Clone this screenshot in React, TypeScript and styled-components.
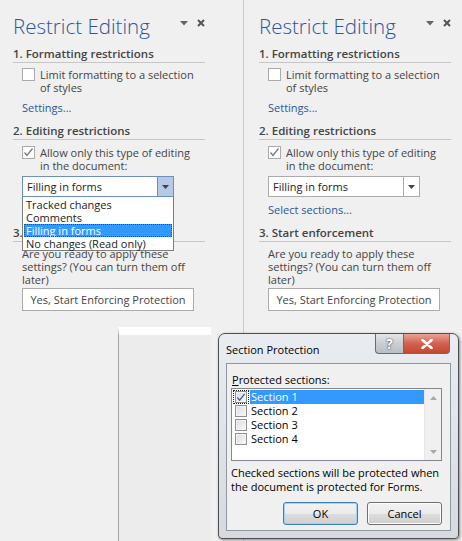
import styled, { createGlobalStyle } from 'styled-components';

const GlobalStyle = createGlobalStyle`
  html, body {
    margin: 0;
    padding: 0;
  }
  body {
    width: 462px;
    height: 541px;
    overflow: hidden;
    background: #f0f0f0;
    font-family: "Open Sans", "Noto Sans", sans-serif;
    color: #444444;
  }
`;

const EDIT_MODES = ['Tracked changes', 'Comments', 'Filling in forms', 'No changes (Read only)'];
const SECTIONS = ['Section 1', 'Section 2', 'Section 3', 'Section 4'];

const CheckMark = ({ color }: { color: string }) => (
  <svg width="11" height="11" viewBox="0 0 11 11">
    <polyline points="1.5,5.5 4,8.5 9.5,1.5" fill="none" stroke={color} strokeWidth="1.3" />
  </svg>
);

const ComboArrow = () => (
  <svg width="7" height="4" viewBox="0 0 7 4">
    <polygon points="0,0 7,0 3.5,4" fill="#444" />
  </svg>
);

interface PaneProps {
  lead: number;
  divider?: boolean;
  open?: boolean;
}

const TaskPane = ({ lead, divider, open }: PaneProps) => (
  <Pane $lead={lead} $divider={divider}>
    <TitleRow>
      <Title>Restrict Editing</Title>
      <PaneControls>
        <svg width="8" height="5" viewBox="0 0 8 5">
          <polygon points="0,0 8,0 4,4.5" fill="#666" />
        </svg>
        <svg width="8" height="8" viewBox="0 0 8 8">
          <path d="M1 1 L7 7 M7 1 L1 7" stroke="#555" strokeWidth="2" />
        </svg>
      </PaneControls>
    </TitleRow>

    <Heading $gap={5}>1. Formatting restrictions</Heading>
    <CheckRow $gap={5}>
      <PaneBox />
      <Label>
        Limit formatting to a selection
        <br />
        of styles
      </Label>
    </CheckRow>
    <PaneLink $gap={7}>Settings...</PaneLink>

    <Heading $gap={9}>2. Editing restrictions</Heading>
    <CheckRow $gap={6}>
      <PaneBox>
        <CheckMark color="#7a7a7a" />
      </PaneBox>
      <Label>
        Allow only this type of editing
        <br />
        in the document:
      </Label>
    </CheckRow>
    <ComboWrap>
      <Combo $open={open}>
        <ComboText>Filling in forms</ComboText>
        <ComboButton $open={open}>
          <ComboArrow />
        </ComboButton>
      </Combo>
      {open && (
        <DropList>
          {EDIT_MODES.map((mode) => (
            <DropItem key={mode} $active={mode === 'Filling in forms'}>
              {mode}
            </DropItem>
          ))}
        </DropList>
      )}
    </ComboWrap>
    {/* covered by the open list on the left pane, so only reserve its space there */}
    <PaneLink $gap={6} $hidden={open}>
      Select sections...
    </PaneLink>

    <Heading $gap={9}>3. Start enforcement</Heading>
    <Paragraph>
      Are you ready to apply these
      <br />
      settings? (You can turn them off
      <br />
      later)
    </Paragraph>
    <FlatButton>Yes, Start Enforcing Protection</FlatButton>
  </Pane>
);

const SectionProtection = () => (
  <Window>
    <TitleBar>
      <WindowTitle>Section Protection</WindowTitle>
      <CaptionButtons>
        <HelpButton>?</HelpButton>
        <CloseButton>
          <svg width="12" height="10" viewBox="0 0 12 10">
            <path d="M1.5 1 L10.5 9 M10.5 1 L1.5 9" stroke="#fff" strokeWidth="2.6" strokeLinecap="round" />
          </svg>
        </CloseButton>
      </CaptionButtons>
    </TitleBar>
    <Client>
      <FieldLabel>
        <u>P</u>rotected sections:
      </FieldLabel>
      <ListBox>
        <ListItems>
          {SECTIONS.map((name, i) => (
            <ListItem key={name}>
              <FocusFrame $focus={i === 0}>
                <ClassicBox>{i === 0 && <CheckMark color="#3b56a0" />}</ClassicBox>
              </FocusFrame>
              <ItemText $selected={i === 0}>{name}</ItemText>
            </ListItem>
          ))}
        </ListItems>
        <ScrollBar>
          <svg width="7" height="4" viewBox="0 0 7 4">
            <polygon points="0,4 7,4 3.5,0" fill="#a8a8a8" />
          </svg>
          <svg width="7" height="4" viewBox="0 0 7 4">
            <polygon points="0,0 7,0 3.5,4" fill="#a8a8a8" />
          </svg>
        </ScrollBar>
      </ListBox>
      <Note>
        Checked sections will be protected when
        <br />
        the document is protected for Forms.
      </Note>
      <ButtonRow>
        <DialogButton $default>OK</DialogButton>
        <DialogButton>Cancel</DialogButton>
      </ButtonRow>
    </Client>
  </Window>
);

const App = () => (
  <>
    <GlobalStyle />
    <Desktop>
      <TaskPane lead={13} divider open />
      <TaskPane lead={15} />
      <BackWindow />
      <SectionProtection />
    </Desktop>
  </>
);

export default App;

const Desktop = styled.div`
  position: relative;
  width: 462px;
  height: 541px;
  display: flex;
  overflow: hidden;
`;

const Pane = styled.section<{ $lead: number; $divider?: boolean }>`
  box-sizing: border-box;
  width: ${(p) => (p.$divider ? '244px' : 'auto')};
  flex: ${(p) => (p.$divider ? 'none' : '1')};
  height: 100%;
  padding: 11px 0 0 ${(p) => p.$lead}px;
  border-right: ${(p) => (p.$divider ? '1px solid #c8c8c8' : 'none')};
  display: flex;
  flex-direction: column;
  font-size: 11px;
  line-height: 13px;
`;

const TitleRow = styled.div`
  width: 192px;
  display: flex;
  justify-content: space-between;
  align-items: flex-start;
`;

const Title = styled.h1`
  margin: 0;
  font-size: 20.5px;
  line-height: 30px;
  font-weight: 300;
  color: #2b579a;
  white-space: nowrap;
`;

const PaneControls = styled.div`
  display: flex;
  align-items: center;
  gap: 9px;
  margin-top: 8px;
`;

const Heading = styled.h2<{ $gap: number }>`
  width: 192px;
  margin: ${(p) => p.$gap}px 0 0;
  font-size: 11.5px;
  line-height: 16px;
  font-weight: 600;
  color: #444;
  border-bottom: 1px solid #c6c6c6;
`;

const CheckRow = styled.div<{ $gap: number }>`
  display: flex;
  align-items: flex-start;
  gap: 5px;
  margin: ${(p) => p.$gap}px 0 0 9px;
`;

const PaneBox = styled.span`
  box-sizing: border-box;
  width: 13px;
  height: 13px;
  flex: none;
  background: #fff;
  border: 1px solid #ababab;
  display: flex;
  align-items: center;
  justify-content: center;
`;

const Label = styled.span`
  color: #444;
`;

const PaneLink = styled.span<{ $gap: number; $hidden?: boolean }>`
  margin: ${(p) => p.$gap}px 0 0 9px;
  color: #2b579a;
  visibility: ${(p) => (p.$hidden ? 'hidden' : 'visible')};
`;

const ComboWrap = styled.div`
  position: relative;
  margin: 4px 0 0 9px;
  width: 152px;
`;

const Combo = styled.div<{ $open?: boolean }>`
  box-sizing: border-box;
  height: 21px;
  display: flex;
  background: #fff;
  border: 1px solid ${(p) => (p.$open ? '#6d8ec0' : '#ababab')};
`;

const ComboText = styled.span`
  flex: 1;
  padding-left: 4px;
  line-height: 19px;
  color: #222;
`;

const ComboButton = styled.span<{ $open?: boolean }>`
  width: 15px;
  display: flex;
  align-items: center;
  justify-content: center;
  background: ${(p) => (p.$open ? '#b6cae6' : '#fff')};
  border-left: 1px solid ${(p) => (p.$open ? '#6d8ec0' : '#ababab')};
`;

const DropList = styled.ul`
  position: absolute;
  top: 21px;
  left: 0;
  right: 0;
  box-sizing: border-box;
  margin: 0;
  padding: 1px 0 0;
  list-style: none;
  background: #fff;
  border: 1px solid #7d7d7d;
  border-top: none;
  z-index: 2;
`;

const DropItem = styled.li<{ $active?: boolean }>`
  height: 13px;
  margin: 0 1px;
  padding-left: 2px;
  line-height: 13px;
  color: ${(p) => (p.$active ? '#fff' : '#222')};
  background: ${(p) => (p.$active ? '#3399ff' : 'transparent')};
  outline: ${(p) => (p.$active ? '1px dotted #1c4f8a' : 'none')};
  outline-offset: -1px;
  white-space: nowrap;
`;

const Paragraph = styled.p`
  margin: 5px 0 0 9px;
  color: #444;
`;

const FlatButton = styled.button`
  box-sizing: border-box;
  width: 172px;
  height: 23px;
  margin: 2px 0 0 9px;
  padding: 0;
  background: #fff;
  border: 1px solid #ababab;
  font: inherit;
  color: #444;
`;

const BackWindow = styled.div`
  position: absolute;
  left: 118px;
  top: 327px;
  width: 93px;
  height: 214px;
  box-sizing: border-box;
  border-top: 8px solid #fff;
  border-left: 1px solid #a6a6a6;
  background: #ececec;
`;

const Window = styled.div`
  position: absolute;
  left: 218px;
  top: 333px;
  width: 241px;
  height: 206px;
  box-sizing: border-box;
  padding: 0 7px 7px;
  border: 1px solid #4f4f4f;
  border-radius: 7px 7px 4px 4px;
  background: linear-gradient(#e9ecf0, #d6dadf);
  box-shadow: 1px 1px 3px rgba(0, 0, 0, 0.45);
  display: flex;
  flex-direction: column;
  font-size: 11px;
  line-height: 13px;
  color: #000;
`;

const TitleBar = styled.div`
  flex: none;
  height: 29px;
  display: flex;
  justify-content: space-between;
  align-items: flex-start;
`;

const WindowTitle = styled.span`
  margin-top: 9px;
`;

const CaptionButtons = styled.div`
  display: flex;
  margin-right: 1px;
`;

const CaptionButton = styled.span`
  box-sizing: border-box;
  height: 20px;
  display: flex;
  align-items: center;
  justify-content: center;
  border: 1px solid #6b6b6b;
  border-top: none;
`;

const HelpButton = styled(CaptionButton)`
  width: 28px;
  border-right: none;
  border-radius: 0 0 0 4px;
  background: linear-gradient(#e3e6ea, #c9ced4 50%, #b9bfc6);
  color: #fff;
  font-size: 14px;
  font-weight: 700;
  text-shadow: 0 0 2px #555, 0 0 1px #333;
`;

const CloseButton = styled(CaptionButton)`
  width: 47px;
  border-radius: 0 0 4px 0;
  background: linear-gradient(#e8a496, #d2614f 50%, #c44733);
`;

const Client = styled.div`
  flex: 1;
  box-sizing: border-box;
  padding: 9px 8px 0 4px;
  background: #f0f0f0;
  border: 1px solid #8f97a0;
  display: flex;
  flex-direction: column;
`;

const FieldLabel = styled.span`
  padding-left: 1px;

  u {
    text-decoration-thickness: 1px;
    text-underline-offset: 1px;
  }
`;

const ListBox = styled.div`
  flex: none;
  box-sizing: border-box;
  height: 73px;
  margin-top: 2px;
  display: flex;
  background: #fff;
  border: 1px solid #828790;
`;

const ListItems = styled.div`
  flex: 1;
  padding-top: 1px;
`;

const ListItem = styled.div`
  height: 14px;
  display: flex;
  align-items: center;
`;

const FocusFrame = styled.span<{ $focus?: boolean }>`
  box-sizing: border-box;
  width: 16px;
  height: 14px;
  margin-left: 1px;
  display: flex;
  align-items: center;
  justify-content: center;
  outline: ${(p) => (p.$focus ? '1px dotted #222' : 'none')};
  outline-offset: -1px;
`;

const ClassicBox = styled.span`
  box-sizing: border-box;
  width: 12px;
  height: 12px;
  display: flex;
  align-items: center;
  justify-content: center;
  border: 1px solid #8e8f8f;
  background: linear-gradient(135deg, #dcdcdc, #fafafa);
  box-shadow: inset 0 0 0 1px #f4f4f4;
`;

const ItemText = styled.span<{ $selected?: boolean }>`
  flex: 1;
  height: 14px;
  margin-left: 1px;
  padding-left: 1px;
  line-height: 14px;
  color: ${(p) => (p.$selected ? '#fff' : '#000')};
  background: ${(p) => (p.$selected ? '#3399ff' : 'transparent')};
`;

const ScrollBar = styled.div`
  width: 17px;
  flex: none;
  background: #f0f0f0;
  border-left: 1px solid #e6e6e6;
  display: flex;
  flex-direction: column;
  align-items: center;
  justify-content: space-between;
  padding: 7px 0 6px;
  box-sizing: border-box;
`;

const Note = styled.p`
  margin: 5px 0 0;
  line-height: 14px;
`;

const ButtonRow = styled.div`
  display: flex;
  justify-content: flex-end;
  gap: 9px;
  margin-top: 8px;
`;

const DialogButton = styled.button<{ $default?: boolean }>`
  box-sizing: border-box;
  width: 75px;
  height: 23px;
  padding: 0;
  border: 1px solid ${(p) => (p.$default ? '#3c7fb1' : '#707070')};
  border-radius: 3px;
  background: linear-gradient(#f2f2f2, #ebebeb 50%, #dddddd 51%, #cfcfcf);
  box-shadow: ${(p) => (p.$default ? 'inset 0 0 0 1px #9fd4f3' : 'inset 0 0 0 1px #fcfcfc')};
  font: inherit;
  color: #000;
`;
